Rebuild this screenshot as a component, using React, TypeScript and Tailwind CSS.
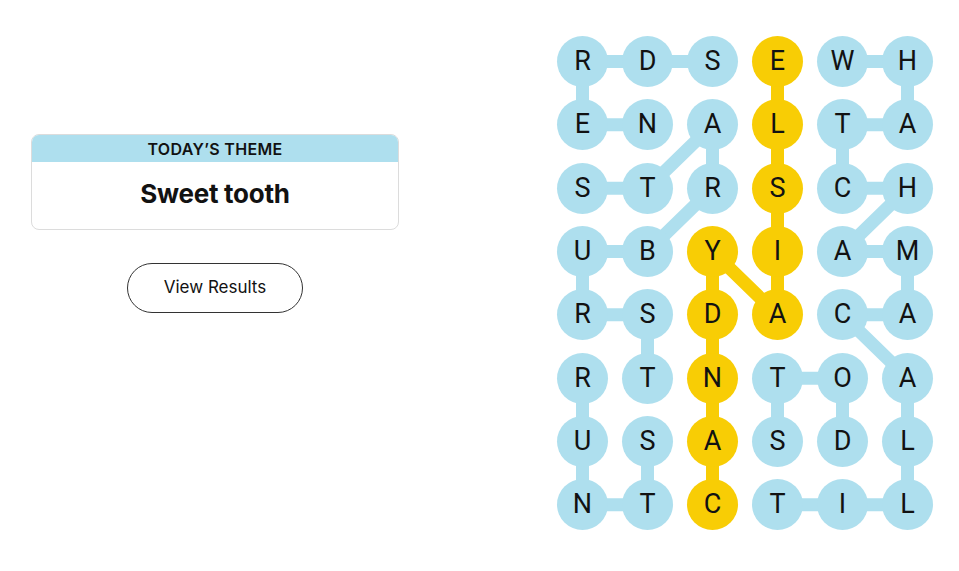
import React from 'react';

const BLUE = '#aedfee';
const YELLOW = '#f8cd05';

const LETTERS = [
  'RDSEWH',
  'ENALTA',
  'STRSCH',
  'UBYIAM',
  'RSDACA',
  'RTNTOA',
  'USASDL',
  'NTCTIL',
];

// [row, col] paths, each drawn as connected segments
const WORDS: { path: [number, number][]; spangram?: boolean }[] = [
  { path: [[1, 1], [1, 0], [0, 0], [0, 1], [0, 2]] }, // NERDS
  { path: [[2, 0], [2, 1], [1, 2], [2, 2], [3, 1], [3, 0], [4, 0], [4, 1], [5, 1]] }, // STARBURST
  { path: [[5, 0], [6, 0], [7, 0], [7, 1], [6, 1]] }, // RUNTS
  {
    path: [[7, 2], [6, 2], [5, 2], [4, 2], [3, 2], [4, 3], [3, 3], [2, 3], [1, 3], [0, 3]],
    spangram: true,
  }, // CANDYAISLE
  {
    path: [
      [0, 4], [0, 5], [1, 5], [1, 4], [2, 4], [2, 5], [3, 4], [3, 5],
      [4, 5], [4, 4], [5, 5], [6, 5], [7, 5], [7, 4], [7, 3],
    ],
  }, // WHATCHAMACALLIT
  { path: [[6, 4], [5, 4], [5, 3], [6, 3]] }, // DOTS
];

const CELL = 51;
const PX = 65;
const PY = 63.33;

const yellowCells = new Set(
  WORDS.filter((w) => w.spangram).flatMap((w) => w.path.map(([r, c]) => `${r}-${c}`))
);

const cx = (c: number) => CELL / 2 + c * PX;
const cy = (r: number) => CELL / 2 + r * PY;

function Board() {
  const width = CELL + 5 * PX;
  const height = CELL + 7 * PY;
  return (
    <div className="relative" style={{ width, height }}>
      <svg className="absolute inset-0" width={width} height={height}>
        {WORDS.map((w, i) => (
          <polyline
            key={i}
            points={w.path.map(([r, c]) => `${cx(c)},${cy(r)}`).join(' ')}
            fill="none"
            stroke={w.spangram ? YELLOW : BLUE}
            strokeWidth={13}
            strokeLinejoin="round"
          />
        ))}
      </svg>
      <div className="relative grid grid-cols-[repeat(6,51px)] grid-rows-[repeat(8,51px)] gap-x-[14px] gap-y-[12.33px]">
        {LETTERS.map((row, r) =>
          row.split('').map((ch, c) => (
            <div
              key={`${r}-${c}`}
              className={`flex h-[51px] w-[51px] items-center justify-center rounded-full font-['Roboto',sans-serif] text-[27px] leading-none text-[#121212] ${
                yellowCells.has(`${r}-${c}`) ? 'bg-[#f8cd05]' : 'bg-[#aedfee]'
              }`}
            >
              {ch}
            </div>
          ))
        )}
      </div>
    </div>
  );
}

export default function App() {
  return (
    <div className="flex h-[571px] w-[959px] bg-white font-['Inter',sans-serif] text-[#121212]">
      <div className="ml-[31px] flex w-[368px] flex-col items-center pt-[134px]">
        <div className="w-full overflow-hidden rounded-lg border border-[#dcdcdc]">
          <div className="flex h-[27px] items-center justify-center bg-[#aedfee] text-[16px] font-semibold tracking-[0.02em]">
            TODAY’S THEME
          </div>
          <div className="flex h-[67px] items-center justify-center pb-[4px] text-[26px] font-bold tracking-[-0.01em]">
            Sweet tooth
          </div>
        </div>
        <button className="mt-[33px] h-[50px] w-[176px] rounded-full border border-[#333] text-[17px] text-[#121212]">
          View Results
        </button>
      </div>
      <div className="ml-[158px] pt-[36px]">
        <Board />
      </div>
    </div>
  );
}
